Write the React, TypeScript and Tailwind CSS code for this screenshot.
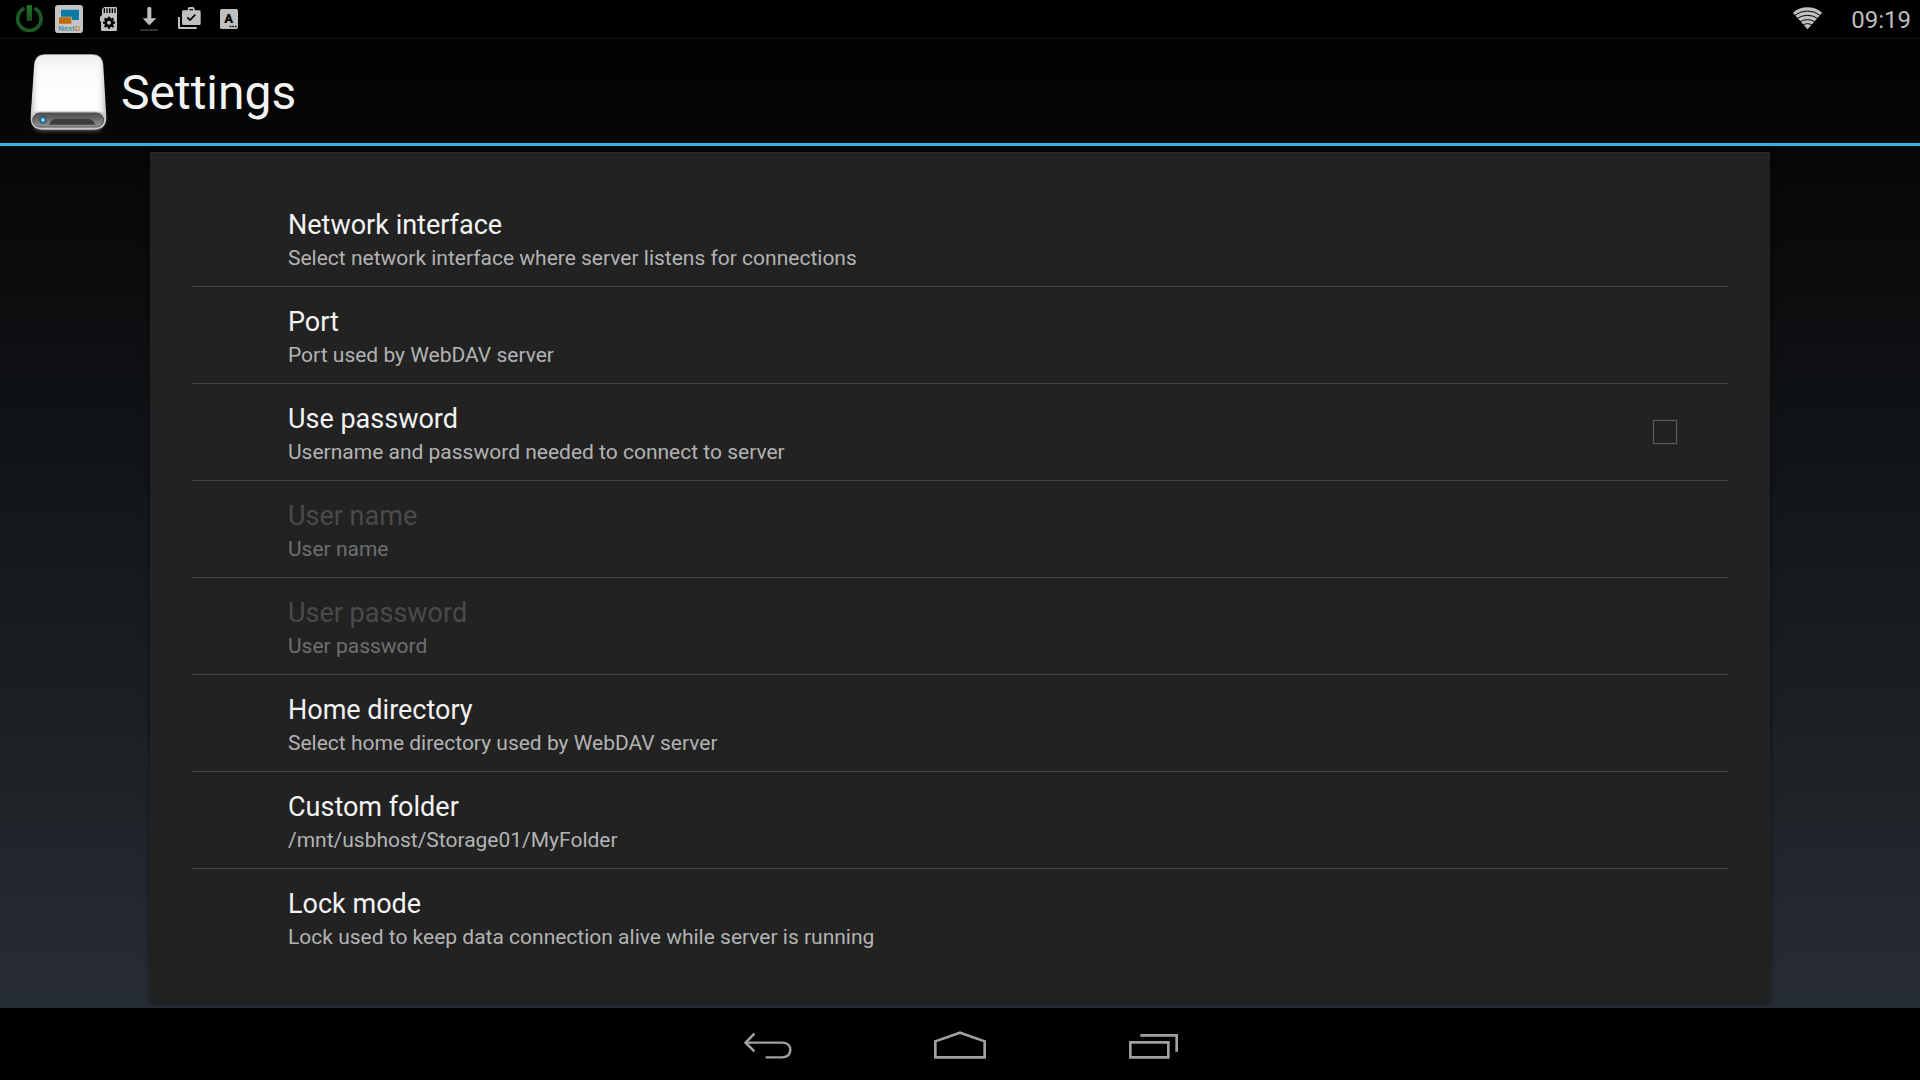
import type { ReactNode } from "react";

type Preference = {
  title: string;
  summary: string;
  disabled?: boolean;
  checkbox?: boolean;
};

const preferences: Preference[] = [
  { title: "Network interface", summary: "Select network interface where server listens for connections" },
  { title: "Port", summary: "Port used by WebDAV server" },
  { title: "Use password", summary: "Username and password needed to connect to server", checkbox: true },
  { title: "User name", summary: "User name", disabled: true },
  { title: "User password", summary: "User password", disabled: true },
  { title: "Home directory", summary: "Select home directory used by WebDAV server" },
  { title: "Custom folder", summary: "/mnt/usbhost/Storage01/MyFolder" },
  { title: "Lock mode", summary: "Lock used to keep data connection alive while server is running" },
];

function StatusIcon({ viewBox, label, children }: { viewBox: string; label: string; children: ReactNode }) {
  return (
    <svg viewBox={viewBox} role="img" aria-label={label} className="h-[38px] w-10" fill="#c0c0c0">
      {children}
    </svg>
  );
}

function StatusBar() {
  return (
    <div className="flex h-[39px] items-start justify-between border-b border-[#141414] bg-black px-[9px]">
      <div className="flex">
        <StatusIcon viewBox="27 0 120 114" label="Power">
          <defs>
            <linearGradient id="power" x1="0" y1="0" x2="0" y2="1">
              <stop offset="0" stopColor="#24752a" />
              <stop offset="1" stopColor="#174d1e" />
            </linearGradient>
          </defs>
          <path d="M69 27a35 35 0 1 0 38 0" fill="none" stroke="#1b5a22" strokeWidth="11" strokeLinecap="round" />
          <rect x="80" y="15" width="16" height="48" rx="3" fill="url(#power)" />
        </StatusIcon>
        <StatusIcon viewBox="147 0 120 114" label="NextD">
          <rect x="165" y="15" width="84" height="84" rx="10" fill="#c4c4c4" />
          <rect x="183" y="29" width="54" height="31" rx="3" fill="#0a7aa6" />
          <rect x="175" y="50" width="41" height="23" rx="3" fill="#c4c4c4" />
          <rect x="177" y="52" width="37" height="19" rx="2" fill="#bd6a0a" />
          <text x="175" y="92" fontSize="24" fontFamily="Roboto, sans-serif" fill="#2a7f9f">
            Next<tspan fill="#c06a10">D</tspan>
          </text>
        </StatusIcon>
        <StatusIcon viewBox="267 0 120 114" label="SD card">
          <path d="M313 21H347Q351 21 351 25V89Q351 93 347 93H307Q303 93 303 89V66L300 62V51L306 45V27Z" />
          <path d="M313 25v14M321 25v14M329 25v14M337 25v14M345 25v14" stroke="#000" strokeWidth="4" />
          <circle cx="327" cy="68" r="10" fill="none" stroke="#000" strokeWidth="8" />
          <path
            d="M327 50v8M327 78v8M309 68h8M337 68h8M314 55l6 6M334 75l6 6M314 81l6-6M334 61l6-6"
            stroke="#000"
            strokeWidth="7"
          />
        </StatusIcon>
        <StatusIcon viewBox="-3 0 120 114" label="Download">
          <path d="M52 24q0-3 6-3t6 3V55H79L59 75H57L38 55H52Z" />
          <rect x="31" y="87" width="53" height="6" fill="#333" />
        </StatusIcon>
        <StatusIcon viewBox="117 0 120 114" label="App updates">
          <path d="M144 51h6v30h50v6H148q-4 0-4-4Z" />
          <path
            d="M160 31h13v-4q0-6 6-6h9q6 0 6 6v4h14q4 0 4 4v36q0 4-4 4H160q-4 0-4-4V35q0-4 4-4Zm18 0h11v-4h-11Z"
            fillRule="evenodd"
          />
          <path d="M172 52l8 8 16-16" fill="none" stroke="#000" strokeWidth="5" />
        </StatusIcon>
        <StatusIcon viewBox="237 0 120 114" label="Keyboard">
          <rect x="270" y="27" width="54" height="60" rx="5" />
          <text x="283" y="70" fontSize="39" fontWeight="900" fontFamily="Roboto, sans-serif" fill="#000">
            A
          </text>
          <path d="M299 77h5v5h-5zM307 77h5v5h-5zM315 77h5v5h-5z" fill="#000" />
        </StatusIcon>
      </div>
      <div className="flex">
        <svg viewBox="68 0 92 114" role="img" aria-label="Wi-Fi" className="mr-7 h-[38px] w-[31px]">
          <path d="M114 88L70 38Q90 22 114 22T158 38Z" fill="#c0c0c0" />
          <g fill="none" stroke="#000" strokeWidth="3">
            <path d="M76 46Q93 33 114 33T152 46" />
            <path d="M84 55Q97 46 114 46T144 55" />
            <path d="M92 65Q102 59 114 59T136 65" />
            <path d="M101 75Q107 71 114 71T127 75" />
          </g>
        </svg>
        <time className="text-2xl leading-10 text-[#bdbdbd]">09:19</time>
      </div>
    </div>
  );
}

function DriveIcon() {
  return (
    <svg viewBox="84 48 240 255" aria-hidden="true" className="h-[85px] w-20">
      <defs>
        <linearGradient id="driveTop" x1="0" y1="0" x2="0" y2="1">
          <stop offset="0" stopColor="#ececec" />
          <stop offset="0.25" stopColor="#fafafa" />
          <stop offset="1" stopColor="#ffffff" />
        </linearGradient>
        <linearGradient id="driveEdge" x1="0" y1="0" x2="1" y2="0">
          <stop offset="0" stopColor="#b8b2b5" stopOpacity="0.8" />
          <stop offset="0.12" stopColor="#ffffff" stopOpacity="0" />
          <stop offset="0.88" stopColor="#ffffff" stopOpacity="0" />
          <stop offset="1" stopColor="#b8b2b5" stopOpacity="0.8" />
        </linearGradient>
        <linearGradient id="driveFront" x1="0" y1="0" x2="0" y2="1">
          <stop offset="0" stopColor="#4a4a4a" />
          <stop offset="1" stopColor="#969696" />
        </linearGradient>
        <filter id="driveGlow" x="-10%" y="-200%" width="120%" height="500%">
          <feGaussianBlur stdDeviation="6" />
        </filter>
      </defs>
      <rect x="104" y="262" width="202" height="26" rx="13" fill="#555" filter="url(#driveGlow)" />
      <path
        d="M136 58H276Q308 58 310 92L319 246Q320 284 280 284H130Q90 284 92 246L102 92Q104 58 136 58Z"
        fill="#c9c9c9"
      />
      <path
        d="M136 60H276Q306 60 308 92L316 236Q306 229 286 229H124Q104 229 94 236L104 92Q106 60 136 60Z"
        fill="url(#driveTop)"
      />
      <path
        d="M136 60H276Q306 60 308 92L316 236Q306 229 286 229H124Q104 229 94 236L104 92Q106 60 136 60Z"
        fill="url(#driveEdge)"
      />
      <rect x="98" y="234" width="213" height="42" rx="21" fill="url(#driveFront)" stroke="#555" strokeWidth="3" />
      <path d="M147 269Q153 251 170 251H262Q279 251 286 269Z" fill="#3d3d3d" />
      <circle cx="129" cy="255" r="11" fill="#2a4f73" />
      <circle cx="129" cy="255" r="8" fill="#3d92cc" />
      <circle cx="129" cy="255" r="4" fill="#a6e8ff" />
    </svg>
  );
}

function PreferenceRow({ item, last }: { item: Preference; last: boolean }) {
  const content = (
    <>
      <span className="flex flex-col gap-[5px] pt-[19px] pb-[15px]">
        <span className={item.disabled ? "text-[27px] leading-8 text-[#4a4a4a]" : "text-[27px] leading-8 text-[#f3f3f3]"}>
          {item.title}
        </span>
        <span
          className={
            item.disabled ? "text-[21px] leading-[25px] text-[#6f6f6f]" : "text-[21px] leading-[25px] text-[#b3b3b3]"
          }
        >
          {item.summary}
        </span>
      </span>
      {item.checkbox && (
        <input
          type="checkbox"
          className="size-6 appearance-none border border-[#5c5c5c] bg-transparent shadow-[0_0_2px_#3a3a3a] checked:bg-[#33b5e5]"
        />
      )}
    </>
  );
  const rowClass = "flex w-full items-center justify-between pr-[51px] pl-24 text-left";
  return (
    <li className={last ? "" : "border-b border-[#434343]"}>
      {item.checkbox ? (
        <label className={rowClass}>{content}</label>
      ) : (
        <button type="button" disabled={item.disabled} className={rowClass}>
          {content}
        </button>
      )}
    </li>
  );
}

function NavButton({ viewBox, label, children }: { viewBox: string; label: string; children: ReactNode }) {
  return (
    <button type="button" aria-label={label} className="flex w-48 items-center justify-center">
      <svg viewBox={viewBox} className="h-9 w-[60px]" fill="none" stroke="#a0a0a0" strokeWidth="8">
        {children}
      </svg>
    </button>
  );
}

export default function App() {
  return (
    <div className="flex min-h-screen flex-col bg-black font-[Roboto,sans-serif]">
      <div className="flex grow flex-col bg-linear-to-b/srgb from-black to-[#272d34]">
        <StatusBar />
        <header className="flex h-[107px] items-center border-b-3 border-[#33b5e5] pt-1 pl-7">
          <DriveIcon />
          <h1 className="ml-[13px] text-5xl text-[#f3f3f3]">Settings</h1>
        </header>
        <main className="mx-[150px] mt-1.5 mb-1.5 grow border-t border-[#2c2c2c] bg-[#222222] px-[42px] pt-[37px] pb-[37px] shadow-[0_1px_6px_rgba(0,0,0,0.5)]">
          <ul>
            {preferences.map((item, i) => (
              <PreferenceRow key={item.title} item={item} last={i === preferences.length - 1} />
            ))}
          </ul>
        </main>
      </div>
      <nav aria-label="System" className="flex h-[72px] justify-center bg-black">
        <NavButton viewBox="54 78 180 108" label="Back">
          <path d="M76 128H188Q211 130 211 150T188 172H137" strokeWidth="7" />
          <path d="M103 101L77 128L103 154" />
        </NavButton>
        <NavButton viewBox="630 78 180 108" label="Home">
          <path d="M646 172V124L720 98L794 124V172Z" />
        </NavButton>
        <NavButton viewBox="1206 78 180 108" label="Recent apps">
          <path d="M1231 127H1345V172H1231Z" />
          <path d="M1261 106H1370V155" />
        </NavButton>
      </nav>
    </div>
  );
}
